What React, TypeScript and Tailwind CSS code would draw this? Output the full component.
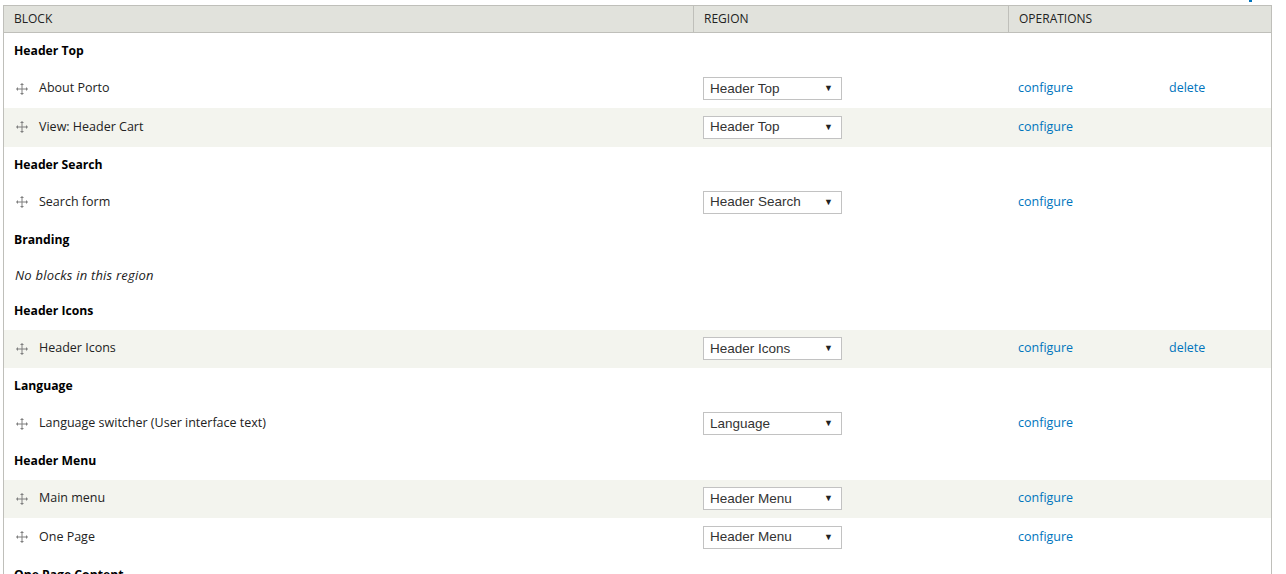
import React from 'react'

type Row =
  | { kind: 'region'; title: string }
  | { kind: 'empty' }
  | { kind: 'block'; label: string; region: string; striped?: boolean; canDelete?: boolean }

const rows: Row[] = [
  { kind: 'region', title: 'Header Top' },
  { kind: 'block', label: 'About Porto', region: 'Header Top', canDelete: true },
  { kind: 'block', label: 'View: Header Cart', region: 'Header Top', striped: true },
  { kind: 'region', title: 'Header Search' },
  { kind: 'block', label: 'Search form', region: 'Header Search' },
  { kind: 'region', title: 'Branding' },
  { kind: 'empty' },
  { kind: 'region', title: 'Header Icons' },
  { kind: 'block', label: 'Header Icons', region: 'Header Icons', striped: true, canDelete: true },
  { kind: 'region', title: 'Language' },
  { kind: 'block', label: 'Language switcher (User interface text)', region: 'Language' },
  { kind: 'region', title: 'Header Menu' },
  { kind: 'block', label: 'Main menu', region: 'Header Menu', striped: true },
  { kind: 'block', label: 'One Page', region: 'Header Menu' },
  { kind: 'region', title: 'One Page Content' },
]

const DragHandle = () => (
  <svg width="12" height="12" viewBox="0 0 12 12" className="shrink-0 text-[#7f7f7f]">
    <path d="M6 1v10M1 6h10" stroke="currentColor" strokeWidth="1" />
    <path d="M6 0l2 2H4zM6 12l2-2H4zM0 6l2-2v4zM12 6l-2-2v4z" fill="currentColor" />
  </svg>
)

const FakeSelect = ({ value }: { value: string }) => (
  <div className="w-[139px] h-[23px] border border-[#c2c2c2] bg-white flex items-center justify-between pl-[6px] pr-[8px] font-['Liberation_Sans',Arial,sans-serif] text-[13.5px] text-[#333]">
    <span>{value}</span>
    <span className="text-[9px] text-[#222]">▼</span>
  </div>
)

export default function App() {
  return (
    <div className="w-[1286px] h-[574px] overflow-hidden bg-white font-['Open_Sans',sans-serif] text-[12.5px] text-[#222]">
      <div className="h-[5px] flex justify-end pr-[34px]">
        <span className="w-[3px] h-[2px] bg-[#0074bd]" />
      </div>
      <div className="ml-[3px] w-[1269px] border border-[#bfbfba] border-b-0">
        <div className="grid grid-cols-[690px_315px_1fr] h-[27px] bg-[#e1e2dc] border-b border-[#bfbfba] text-[12px] text-[#222]">
          <div className="pl-[10px] flex items-center border-r border-[#bfbfba]">BLOCK</div>
          <div className="pl-[10px] flex items-center border-r border-[#bfbfba]">REGION</div>
          <div className="pl-[10px] flex items-center">OPERATIONS</div>
        </div>
        {rows.map((row, i) => {
          if (row.kind === 'region') {
            return (
              <div key={i} className="h-[36.5px] flex items-center pl-[10px] font-bold text-[12.2px] text-black">
                {row.title}
              </div>
            )
          }
          if (row.kind === 'empty') {
            return (
              <div key={i} className="h-[35px] flex items-center pl-[11px] italic text-[13px] tracking-[0.2px] text-[#222]">
                No blocks in this region
              </div>
            )
          }
          return (
            <div
              key={i}
              className={`grid grid-cols-[690px_315px_1fr] h-[38.5px] items-center ${row.striped ? 'bg-[#f3f4ee]' : ''}`}
            >
              <div className="flex items-center pl-[12px] gap-[11px]">
                <DragHandle />
                <span>{row.label}</span>
              </div>
              <div className="pl-[9px]">
                <FakeSelect value={row.region} />
              </div>
              <div className="flex items-center pl-[9px] text-[#0074bd]">
                <span className="w-[151px]">configure</span>
                {row.canDelete && <span>delete</span>}
              </div>
            </div>
          )
        })}
      </div>
    </div>
  )
}
